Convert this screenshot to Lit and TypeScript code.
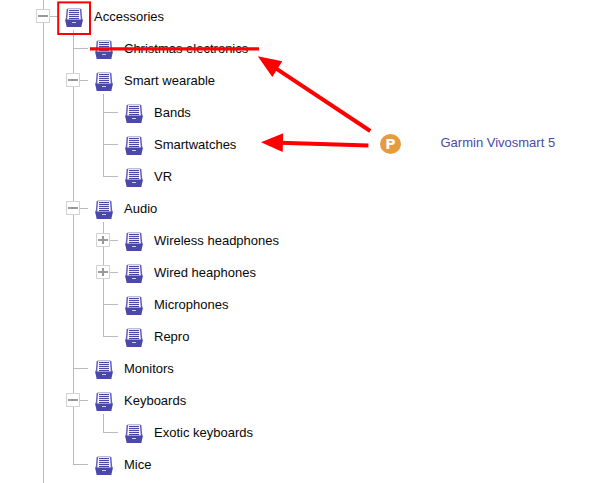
import { LitElement, html, css, svg } from "lit";
import { customElement } from "lit/decorators.js";
import { classMap } from "lit/directives/class-map.js";

interface TreeNode {
  label: string;
  closed?: boolean;
  children?: TreeNode[];
}

const root: TreeNode = {
  label: "Accessories",
  children: [
    { label: "Christmas electronics" },
    {
      label: "Smart wearable",
      children: [{ label: "Bands" }, { label: "Smartwatches" }, { label: "VR" }],
    },
    {
      label: "Audio",
      children: [
        { label: "Wireless headphones", closed: true },
        { label: "Wired heaphones", closed: true },
        { label: "Microphones" },
        { label: "Repro" },
      ],
    },
    { label: "Monitors" },
    { label: "Keyboards", children: [{ label: "Exotic keyboards" }] },
    { label: "Mice" },
  ],
};

const drawer = html`<svg class="drawer" width="20" height="20" viewBox="0 0 20 20">
  <path d="M3.2 0.5H16.8L18 12H2Z" fill="#f6f6fc" />
  <path d="M3.4 0.6H16.6" stroke="#b4b4da" stroke-width="1" />
  <path d="M3.4 1L2.4 12M16.6 1L17.6 12" stroke="#6260b5" stroke-width="1.5" fill="none" />
  ${[2.5, 4.5, 6.5, 8.5, 10.5].map(
    (y) => svg`<path d=${`M5 ${y}H15`} stroke="#4b49a8" stroke-width="1.1" />`
  )}
  <path d="M1 11.6H19L17.3 19H2.7Z" fill="#4b49a5" />
  <path d="M8 14.5H12" stroke="#c9c9e8" stroke-width="1" />
</svg>`;

@customElement("app-root")
export class AppRoot extends LitElement {
  static styles = css`
    :host {
      display: block;
      position: relative;
      width: 606px;
      height: 483px;
      overflow: hidden;
      background: #fff;
      font: 13px/32px "Liberation Sans", Arial, sans-serif;
      color: #080808;
    }
    .tree {
      padding-left: 28px;
    }
    .row {
      display: flex;
      height: 32px;
    }
    .cell {
      flex: none;
      width: 30px;
      height: 32px;
      display: grid;
      place-content: start;
      box-sizing: border-box;
      padding: 9px 0 0 8px;
      --v: linear-gradient(#b9bbbd, #b9bbbd) 15px 0 / 1px 100% no-repeat;
      --h: linear-gradient(#b9bbbd, #b9bbbd) 15px 16px / 15px 1px no-repeat;
    }
    .line {
      background: var(--v);
    }
    .branch {
      background: var(--v), var(--h);
    }
    .branch.last {
      background: linear-gradient(#b9bbbd, #b9bbbd) 15px 0 / 1px 17px no-repeat, var(--h);
    }
    .icon {
      padding: 8px 0 0 6px;
    }
    .icon.open {
      background: linear-gradient(#b9bbbd, #b9bbbd) 15px 30px / 1px 2px no-repeat;
    }
    .drawer {
      display: block;
    }
    .toggle {
      width: 14px;
      height: 14px;
      box-sizing: border-box;
      border: 1px solid #d2d2d2;
      background: linear-gradient(#999, #999) center / 10px 2px no-repeat #fff;
    }
    .toggle.plus {
      background: linear-gradient(#999, #999) center / 10px 2px no-repeat,
        linear-gradient(#999, #999) center / 2px 8px no-repeat #fff;
    }
    .label {
      padding: 1px 0 0 6px;
      white-space: nowrap;
    }
    .marks {
      position: absolute;
      inset: 0;
    }
    .product {
      position: absolute;
      left: 380px;
      top: 134px;
      display: flex;
      align-items: center;
      gap: 39.5px;
      height: 20px;
      color: #4b49a5;
    }
    .badge {
      width: 21px;
      height: 20px;
      border-radius: 50%;
      background: #e79b3f;
      color: #fff;
      font: bold 14px/20px "DejaVu Sans", sans-serif;
      text-align: center;
    }
    .name {
      line-height: 18px;
      padding-bottom: 2px;
    }
  `;

  renderNode(node: TreeNode, trail: boolean[], last: boolean): unknown {
    const kids = node.children ?? [];
    const expandable = node.closed || kids.length > 0;
    return html`<div class="row">
        ${trail.map((on) => html`<span class=${classMap({ cell: true, line: on })}></span>`)}
        <span class=${classMap({ cell: true, branch: true, last })}
          >${expandable
            ? html`<span class=${classMap({ toggle: true, plus: !!node.closed })}></span>`
            : ""}</span
        >
        <span class=${classMap({ cell: true, icon: true, open: kids.length > 0 })}>${drawer}</span>
        <span class="label">${node.label}</span>
      </div>
      ${kids.map((kid, i) => this.renderNode(kid, [...trail, !last], i === kids.length - 1))}`;
  }

  render() {
    return html`
      <div class="tree">${this.renderNode(root, [], false)}<div class="row"><span class="cell line"></span></div></div>
      <div class="product"><span class="badge">P</span><span class="name">Garmin Vivosmart 5</span></div>
      <svg class="marks" width="606" height="483" viewBox="0 0 606 483">
        <rect x="58.2" y="2.4" width="31.8" height="31.6" fill="none" stroke="#f00" stroke-width="2" />
        <path d="M90 48.8L259 48.8" stroke="#f00" stroke-width="3.2" />
        <path d="M370.3 131L274 67.2M368.4 145.4L280 142.8" stroke="#f00" stroke-width="4" />
        <path d="M257.8 56.3L282.3 61.3L272.3 77ZM261 142.3L283.2 133.3L282.7 152Z" fill="#f00" />
      </svg>
    `;
  }
}
